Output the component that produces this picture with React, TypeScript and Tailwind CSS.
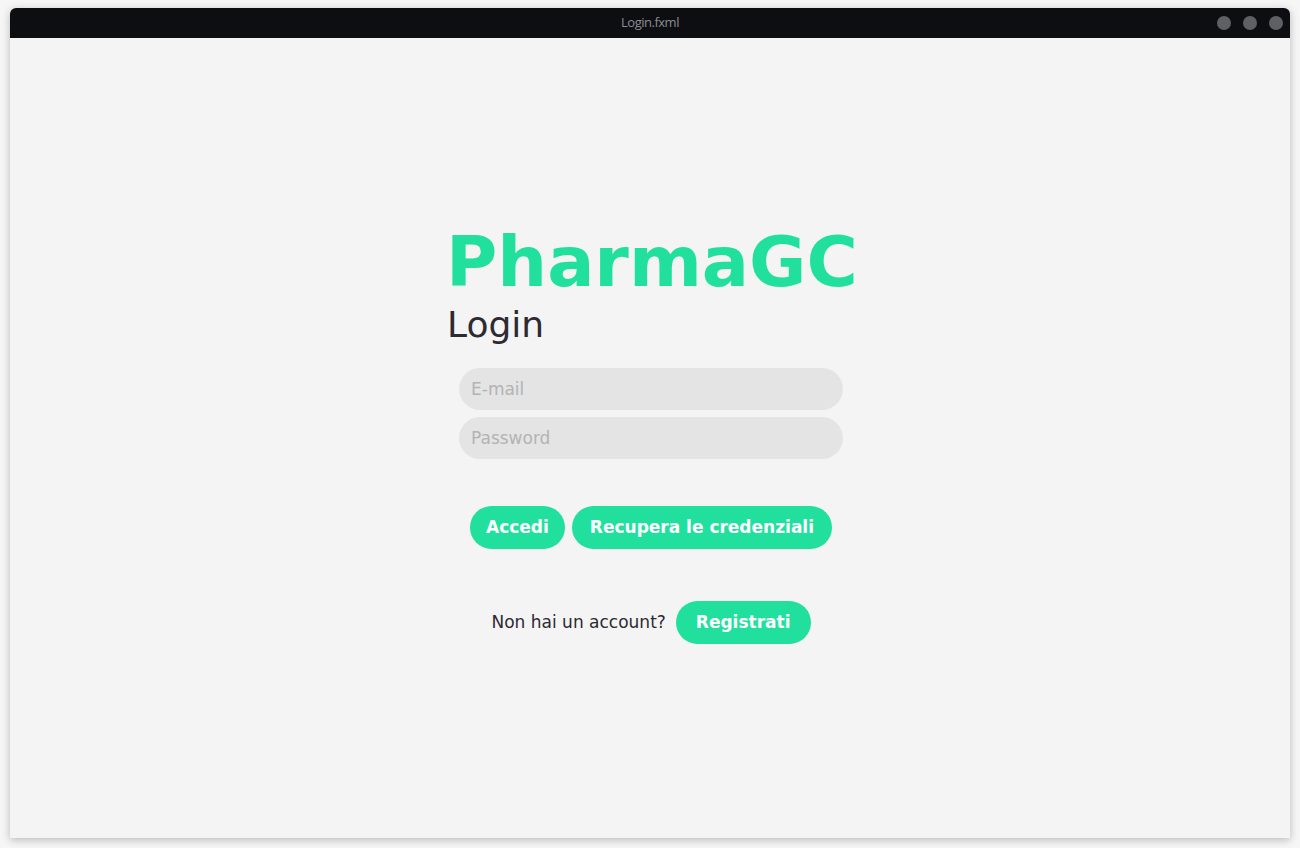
import React from "react";

const font = { fontFamily: '"DejaVu Sans", "Liberation Sans", sans-serif' };

function PillButton({ children, px }: { children: React.ReactNode; px: string }) {
  return (
    <button className={`h-[43px] rounded-full bg-[#21e09e] text-[17px] font-bold text-white ${px}`}>
      {children}
    </button>
  );
}

export default function App() {
  return (
    <div className="min-h-[848px] bg-[#f6f6f6] px-[10px] pt-[8px]" style={font}>
      <div className="flex h-[830px] flex-col overflow-hidden rounded-t-[6px] bg-[#f4f4f4] shadow-[0_2px_8px_rgba(0,0,0,0.25)]">
        {/* title bar */}
        <div className="relative flex h-[30px] items-center justify-center bg-[#0d0e12]">
          <span className="text-[13px] text-[#8c8c92]" style={{ fontFamily: '"Open Sans", "Noto Sans", sans-serif', letterSpacing: "-0.5px" }}>
            Login.fxml
          </span>
          <div className="absolute right-[7px] top-[8px] flex gap-[12px]">
            <span className="h-[14px] w-[14px] rounded-full bg-[#5f6066]" />
            <span className="h-[14px] w-[14px] rounded-full bg-[#5f6066]" />
            <span className="h-[14px] w-[14px] rounded-full bg-[#5f6066]" />
          </div>
        </div>

        {/* body */}
        <div className="flex flex-1 flex-col items-center pl-[2px]">
          <div className="mt-[189px] flex w-[410px] flex-col">
            <h1 className="text-[70px] font-bold leading-[70px] text-[#21e09e]">PharmaGC</h1>
            <h2 className="ml-[1px] mt-[10px] text-[36px] leading-[36px] text-[#2d2a32]">Login</h2>
          </div>

          <div className="mt-[25px] flex w-[384px] flex-col gap-[7px]">
            <input
              placeholder="E-mail"
              className="h-[42px] rounded-full bg-[#e4e4e4] px-[12px] text-[17px] outline-none placeholder:text-[#b3b3b3]"
            />
            <input
              type="password"
              placeholder="Password"
              className="h-[42px] rounded-full bg-[#e4e4e4] px-[12px] text-[17px] outline-none placeholder:text-[#b3b3b3]"
            />
          </div>

          <div className="mt-[47px] flex gap-[7px]">
            <PillButton px="px-[16px]">Accedi</PillButton>
            <PillButton px="px-[18px]">Recupera le credenziali</PillButton>
          </div>

          <div className="mt-[52px] flex items-center gap-[10px]">
            <span className="text-[17px] text-[#2d2a32]">Non hai un account?</span>
            <PillButton px="px-[20px]">Registrati</PillButton>
          </div>
        </div>
      </div>
    </div>
  );
}
